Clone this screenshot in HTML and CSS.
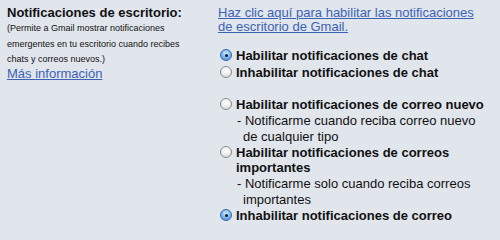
FILE: index.html
```html
<!DOCTYPE html>
<html lang="es">
<head>
<meta charset="utf-8">
<link rel="stylesheet" href="styles.css">
</head>
<body>
<div class="page">
  <div class="left">
    <div class="title">Notificaciones de escritorio:</div>
    <div class="note">(Permite a Gmail mostrar notificaciones emergentes en tu escritorio cuando recibes chats y correos nuevos.)</div>
    <a class="more" href="#">Más información</a>
  </div>
  <div class="right">
    <a class="enable-link" href="#">Haz clic aquí para habilitar las notificaciones de escritorio de Gmail.</a>
    <div class="group chat">
      <label class="opt"><span class="radio checked"></span><span class="lbl">Habilitar notificaciones de chat</span></label>
      <label class="opt"><span class="radio"></span><span class="lbl">Inhabilitar notificaciones de chat</span></label>
    </div>
    <div class="group mail">
      <label class="opt"><span class="radio"></span><span class="lbl">Habilitar notificaciones de correo nuevo</span></label>
      <div class="desc">- Notificarme cuando reciba correo nuevo de cualquier tipo</div>
      <label class="opt"><span class="radio"></span><span class="lbl">Habilitar notificaciones de correos importantes</span></label>
      <div class="desc">- Notificarme solo cuando reciba correos importantes</div>
      <label class="opt"><span class="radio checked"></span><span class="lbl">Inhabilitar notificaciones de correo</span></label>
    </div>
  </div>
</div>
</body>
</html>
```
FILE: styles.css
```css
html, body {
  margin: 0;
  padding: 0;
  background: #e1e5ec;
}
body {
  font-family: "Liberation Sans", Arial, sans-serif;
  color: #111;
  width: 500px;
  height: 229px;
  overflow: hidden;
}
.page {
  display: flex;
  padding: 5px 0 0 7px;
}
.left {
  width: 211px;
  flex: none;
}
.title {
  font-weight: bold;
  font-size: 13px;
  line-height: 16px;
}
.note {
  font-size: 9px;
  line-height: 15.5px;
  width: 185px;
}
.more, .enable-link {
  color: #3b62b4;
  text-decoration: underline;
  font-size: 13px;
}
.more {
  display: block;
  line-height: 15px;
  margin-top: -2px;
}
.right {
  flex: 1;
  padding-top: 1px;
}
.enable-link {
  display: block;
  line-height: 14px;
  width: 270px;
}
.group.chat {
  margin-top: 14px;
}
.group.mail {
  margin-top: 17px;
}
.opt {
  display: flex;
  align-items: flex-start;
  font-weight: bold;
  font-size: 13px;
  line-height: 15px;
}
.chat .opt + .opt {
  margin-top: 2px;
}
.lbl {
  width: 250px;
}
.radio {
  flex: none;
  width: 12px;
  height: 12px;
  border-radius: 50%;
  margin: 1px 4px 0 2px;
  box-sizing: border-box;
  border: 1px solid #8a8a8a;
  background: radial-gradient(circle at 50% 30%, #ffffff 0%, #f2f2f2 45%, #cfcfcf 100%);
  position: relative;
}
.radio.checked {
  border-color: #3a6aa8;
  background: radial-gradient(circle at 50% 35%, #d8ecff 0%, #7fb6ee 50%, #3f86d8 100%);
}
.radio.checked::after {
  content: "";
  position: absolute;
  left: 3.5px;
  top: 3.5px;
  width: 3px;
  height: 3px;
  border-radius: 50%;
  background: #0b1a33;
}
.desc {
  font-size: 13px;
  line-height: 16px;
  margin-top: 1px;
  padding-left: 25px;
  text-indent: -6px;
  width: 235px;
  color: #111;
}
```
